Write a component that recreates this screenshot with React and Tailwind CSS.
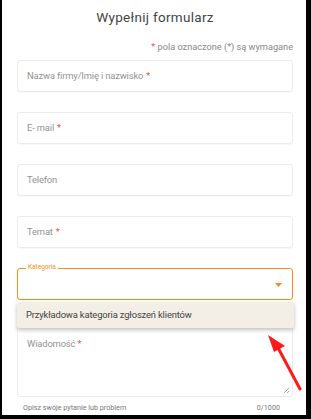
import React from "react";

const Field = ({ label, required }) => (
  <div className="h-8 rounded-[3px] border border-[#ebebeb] shadow-[0_1px_1px_rgba(0,0,0,0.03)] flex items-center px-[9px] text-[9.4px] tracking-[-0.15px] text-[#939393]">
    {label}
    {required && <span className="ml-[3px] text-[#ef5350]">*</span>}
  </div>
);

const App = () => {
  return (
    <div
      className="relative w-[311px] h-[419px] bg-white border-l-2 border-r-[5px] border-b-4 border-black overflow-hidden"
      style={{ fontFamily: "Roboto, 'Liberation Sans', sans-serif" }}
    >
      <div className="flex flex-col pl-[15px] pr-[13px]">
        <h1 className="mt-[7px] text-center text-[13.5px] leading-5 text-[#444] tracking-[0.3px]">Wypełnij formularz</h1>
        <p className="mt-[14px] text-right text-[9.2px] leading-3 text-[#888]">
          <span className="text-[#ef5350]">*</span> pola oznaczone (*) są wymagane
        </p>

        <div className="mt-[7px] flex flex-col gap-5">
          <Field label="Nazwa firmy/Imię i nazwisko" required />
          <Field label="E- mail" required />
          <Field label="Telefon" />
          <Field label="Temat" required />

          {/* Kategoria select, focused */}
          <div className="relative h-8 rounded-[3px] border-[1.5px] border-[#f68b1f]">
            <span className="absolute -top-[6px] left-[8px] bg-white px-[2px] text-[6.5px] leading-[9px] text-[#f68b1f]">
              Kategoria
            </span>
            <svg className="absolute right-[10px] top-[14px]" width="7" height="4" viewBox="0 0 7 4">
              <path d="M0 0h7L3.5 4z" fill="#f68b1f" />
            </svg>
          </div>
        </div>

        <div className="mt-5 h-[77px] rounded-[3px] border border-[#ebebeb] px-[9px] pt-[9px] relative">
          <span className="text-[9.4px] tracking-[-0.15px] text-[#939393]">
            Wiadomość <span className="text-[#ef5350]">*</span>
          </span>
          <svg className="absolute right-[3px] bottom-[3px]" width="6" height="6" viewBox="0 0 6 6">
            <path d="M1 6L6 1M4 6L6 4" stroke="#999" strokeWidth="0.8" />
          </svg>
        </div>
        <div className="mt-[6px] flex justify-between pl-[6px] pr-[13px] text-[7.2px] text-[#777]">
          <span>Opisz swoje pytanie lub problem</span>
          <span>0/1000</span>
        </div>
      </div>

      {/* dropdown menu */}
      <div className="absolute left-[15px] top-[302px] w-[277px] h-[26px] bg-[#f3efe6] rounded-[2px] shadow-[0_2px_4px_rgba(0,0,0,0.25)] flex items-center px-[9px] text-[9.4px] tracking-[-0.15px] text-[#444]">
        Przykładowa kategoria zgłoszeń klientów
      </div>

      {/* red annotation arrow */}
      <svg className="absolute left-0 top-0" width="311" height="419" viewBox="0 0 311 419">
        <path d="M298 389L274 344" stroke="#ff1a1a" strokeWidth="3" strokeLinecap="round" />
        <path d="M266 335L283 346L272 352Z" fill="#ff1a1a" />
      </svg>
    </div>
  );
};

export default App;
